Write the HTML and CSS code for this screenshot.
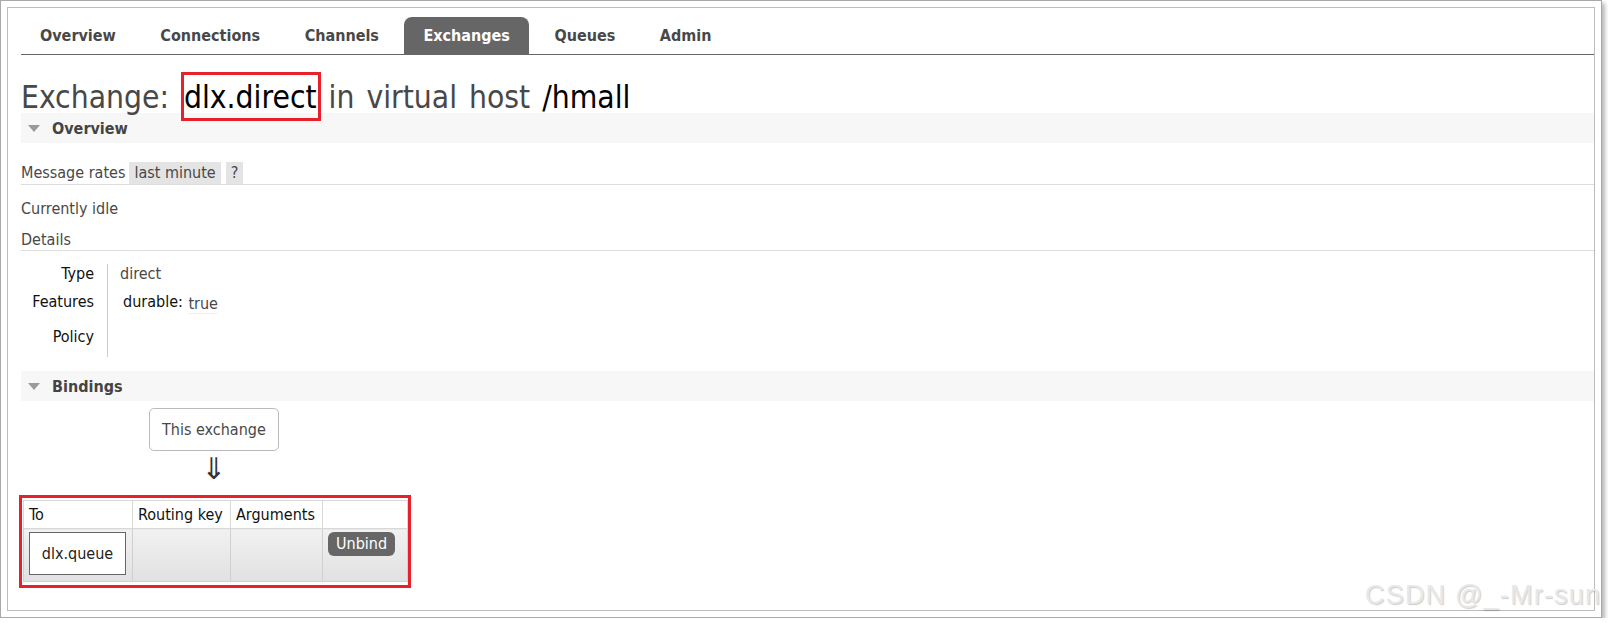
FILE: index.html
```html
<!DOCTYPE html>
<html lang="en">
<head>
<meta charset="utf-8">
<title>RabbitMQ Management - Exchange dlx.direct</title>
<link rel="stylesheet" href="styles.css">
</head>
<body>
<div class="frame">
  <div class="inner">
    <nav class="menu">
      <a class="tab">Overview</a>
      <a class="tab">Connections</a>
      <a class="tab">Channels</a>
      <a class="tab selected">Exchanges</a>
      <a class="tab">Queues</a>
      <a class="tab">Admin</a>
    </nav>

    <h1 class="title">Exchange: <b class="mark">dlx.direct</b> in virtual host <b>/hmall</b></h1>

    <div class="section-bar"><span class="tri"></span><span class="section-title">Overview</span></div>

    <div class="rates-row">
      <span class="rates-label">Message rates</span>
      <span class="pill">last minute</span>
      <span class="pill help">?</span>
    </div>
    <p class="idle">Currently idle</p>
    <p class="details-head">Details</p>

    <div class="facts">
      <div class="fact-label r1">Type</div>
      <div class="fact-value r1">direct</div>
      <div class="fact-label r2">Features</div>
      <div class="fact-value r2"><span class="feat-key">durable:</span> <span class="feat-val">true</span></div>
      <div class="fact-label r3">Policy</div>
      <div class="fact-value r3"></div>
    </div>

    <div class="section-bar bindings-bar"><span class="tri"></span><span class="section-title">Bindings</span></div>

    <div class="flow">
      <div class="this-ex">This exchange</div>
      <div class="arrow">&#8659;</div>
    </div>

    <div class="bind-wrap">
      <table class="bind-table">
        <colgroup>
          <col class="c1">
          <col class="c2">
          <col class="c3">
          <col class="c4">
        </colgroup>
        <thead>
          <tr>
            <th>To</th>
            <th>Routing key</th>
            <th>Arguments</th>
            <th></th>
          </tr>
        </thead>
        <tbody>
          <tr>
            <td><span class="queue-box">dlx.queue</span></td>
            <td></td>
            <td></td>
            <td><span class="unbind">Unbind</span></td>
          </tr>
        </tbody>
      </table>
    </div>
  </div>
  <div class="watermark">CSDN @_-Mr-sun</div>
</div>
</body>
</html>
```

FILE: styles.css
```css
html, body {
  margin: 0;
  padding: 0;
  background: #ffffff;
}

body {
  font-family: "DejaVu Sans Condensed", "DejaVu Sans", sans-serif;
  font-stretch: condensed;
  font-size: 16px;
  line-height: 19px;
  color: #484848;
}

.frame {
  position: relative;
  width: 1602px;
  height: 618px;
  box-sizing: border-box;
  border: 1px solid #a9a9a9;
  padding: 6px;
  background: #fff;
  box-shadow: 3px 3px 4px rgba(0, 0, 0, 0.28);
}

.inner {
  height: 100%;
  box-sizing: border-box;
  border: 1px solid #bdbdbd;
  padding: 9px 0 0 13px;
}

/* tabs */
.menu {
  display: flex;
  gap: 6.5px;
  border-bottom: 1px solid #666;
}

.tab {
  display: block;
  height: 37px;
  line-height: 37px;
  padding: 0 19px;
  font-weight: bold;
  color: #484848;
  border-radius: 8px 8px 0 0;
}

.tab.selected {
  background: #666;
  color: #fff;
}

/* title */
.title {
  margin: 27px 0 0 0;
  font-size: 31.5px;
  line-height: 31px;
  height: 31px;
  font-weight: normal;
  color: #484848;
  white-space: nowrap;
  word-spacing: 3px;
}

.title b {
  font-weight: normal;
  color: #000;
}

.mark {
  position: relative;
  margin-left: 3px;
}

.mark::after {
  content: "";
  position: absolute;
  left: -3px;
  right: -4px;
  top: -7px;
  bottom: -6px;
  border: 3px solid #e8202b;
}

/* section bars */
.section-bar {
  display: flex;
  align-items: center;
  height: 30px;
  background: #f7f7f7;
  padding-left: 7px;
}

.tri {
  width: 0;
  height: 0;
  border-left: 6px solid transparent;
  border-right: 6px solid transparent;
  border-top: 7px solid #9a9a9a;
  margin-right: 12px;
}

.section-title {
  font-weight: bold;
  color: #444;
}

/* overview content */
.rates-row {
  display: flex;
  margin-top: 19px;
  border-bottom: 1px solid #ddd;
  line-height: 22px;
  height: 22px;
}

.rates-label {
  margin-right: 4px;
}

.pill {
  background: #e4e4e4;
  padding: 0 5px;
  margin-right: 5px;
}

.idle {
  margin: 14px 0 0 0;
}

.details-head {
  margin: 12px 0 0 0;
  padding-bottom: 1px;
  border-bottom: 1px solid #ddd;
}

.facts {
  display: grid;
  grid-template-columns: 86px 1fr;
  grid-template-rows: 28px 35px 30px;
  margin-top: 13px;
}

.fact-label {
  text-align: right;
  padding-right: 13px;
  color: #111;
}

.fact-value {
  border-left: 1px solid #ccc;
  padding-left: 12px;
}

.feat-key {
  color: #111;
  margin-left: 3px;
}

.feat-val {
  display: inline-block;
  margin-left: 1px;
  position: relative;
  top: 2px;
  border-bottom: 1px solid #eee;
  border-radius: 3px;
}

.bindings-bar {
  margin-top: 14px;
}

/* bindings flow */
.flow {
  display: inline-flex;
  flex-direction: column;
  align-items: center;
  margin: 7px 0 0 128px;
}

.this-ex {
  border: 1px solid #bbb;
  border-radius: 5px;
  height: 41px;
  line-height: 41px;
  padding: 0 12px;
}

.arrow {
  font-family: "DejaVu Sans", sans-serif;
  font-stretch: normal;
  font-size: 30px;
  line-height: 30px;
  color: #333;
  margin-top: 3px;
}

.bind-wrap {
  position: relative;
  width: 384px;
  margin: 16px 0 0 2px;
}

.bind-wrap::after {
  content: "";
  position: absolute;
  left: -4px;
  right: -4px;
  top: -5px;
  bottom: -6px;
  border: 3px solid #e8202b;
}

.bind-table {
  border-collapse: collapse;
  width: 384px;
  table-layout: fixed;
}

.c1 { width: 109px; }
.c2 { width: 98px; }
.c3 { width: 92px; }
.c4 { width: 85px; }

.bind-table th {
  box-sizing: border-box;
  font-weight: normal;
  text-align: left;
  color: #111;
  height: 28px;
  padding: 0 5px;
  border: 1px solid #d8d8d8;
  background: #fff;
  vertical-align: middle;
  white-space: nowrap;
}

.bind-table td {
  box-sizing: border-box;
  height: 53px;
  padding: 3px 5px 0 5px;
  border: 1px solid #d0d0d0;
  background: linear-gradient(#f1f1f1, #e1e1e1);
  vertical-align: top;
}

.queue-box {
  display: block;
  width: 95px;
  height: 41px;
  line-height: 41px;
  text-align: center;
  background: #fff;
  border: 1px solid #666;
  color: #222;
}

.unbind {
  display: inline-block;
  background: #666;
  color: #fff;
  border-radius: 6px;
  height: 24px;
  line-height: 24px;
  padding: 0 8px;
}

.watermark {
  position: absolute;
  left: 1364px;
  top: 579px;
  font-family: "Liberation Sans", Arial, sans-serif;
  font-stretch: normal;
  font-size: 27px;
  line-height: 30px;
  letter-spacing: 1.2px;
  color: #e8e8e8;
  text-shadow: 1px 1px 1px rgba(0, 0, 0, 0.2);
  white-space: nowrap;
}
```
